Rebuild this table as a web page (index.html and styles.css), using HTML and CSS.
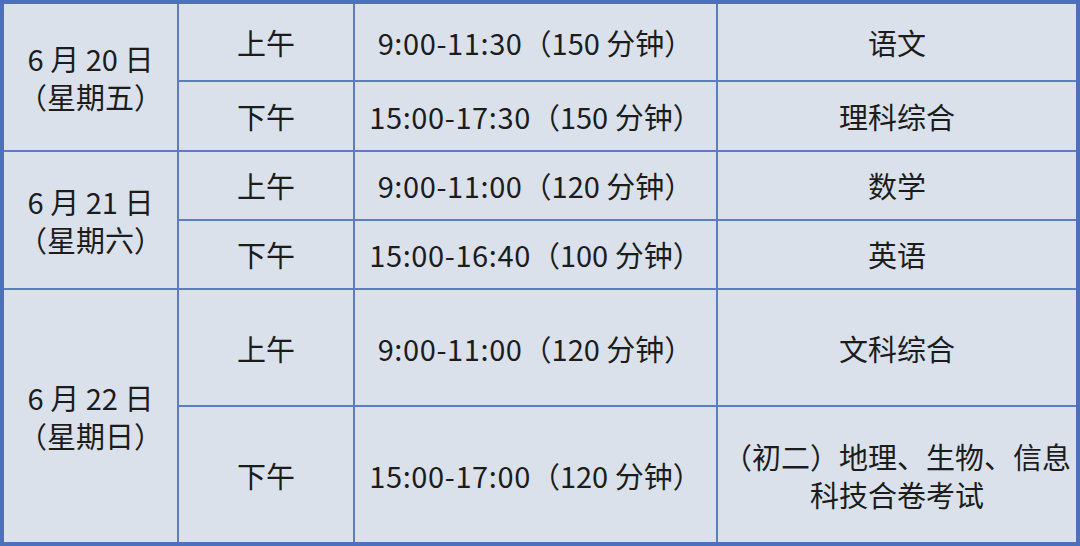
FILE: index.html
```html
<!DOCTYPE html>
<html lang="zh">
<head>
<meta charset="utf-8">
<link rel="stylesheet" href="styles.css">
</head>
<body>
<table class="schedule">
  <colgroup>
    <col class="c-date">
    <col class="c-period">
    <col class="c-time">
    <col class="c-subject">
  </colgroup>
  <tbody>
    <tr class="r1">
      <td rowspan="2" class="date">6 月 20 日<br>（星期五）</td>
      <td>上午</td>
      <td class="time"><span class="num">9:00-11:30</span>（150 分钟）</td>
      <td>语文</td>
    </tr>
    <tr class="r2">
      <td>下午</td>
      <td class="time"><span class="num">15:00-17:30</span>（150 分钟）</td>
      <td>理科综合</td>
    </tr>
    <tr class="r3">
      <td rowspan="2" class="date">6 月 21 日<br>（星期六）</td>
      <td>上午</td>
      <td class="time"><span class="num">9:00-11:00</span>（120 分钟）</td>
      <td>数学</td>
    </tr>
    <tr class="r4">
      <td>下午</td>
      <td class="time"><span class="num">15:00-16:40</span>（100 分钟）</td>
      <td>英语</td>
    </tr>
    <tr class="r5">
      <td rowspan="2" class="date">6 月 22 日<br>（星期日）</td>
      <td>上午</td>
      <td class="time"><span class="num">9:00-11:00</span>（120 分钟）</td>
      <td>文科综合</td>
    </tr>
    <tr class="r6">
      <td>下午</td>
      <td class="time"><span class="num">15:00-17:00</span>（120 分钟）</td>
      <td class="multi">（初二）地理、生物、信息<br>科技合卷考试</td>
    </tr>
  </tbody>
</table>
</body>
</html>
```

FILE: styles.css
```css
html, body {
  margin: 0;
  padding: 0;
  background: #dae1eb;
}

.schedule {
  width: 1080px;
  height: 546px;
  border-collapse: collapse;
  table-layout: fixed;
  background: #dae1eb;
  border: 4px solid #4d70bb;
  font-family: "Noto Sans CJK SC", "Noto Sans", sans-serif;
  font-size: 29px;
  color: #1c1c1c;
}

.c-date { width: 176px; }
.c-period { width: 176px; }
.c-time { width: 363px; }
.c-subject { width: 361px; }

.schedule td {
  border: 2px solid #5c7ec0;
  text-align: center;
  vertical-align: middle;
  padding: 0;
  line-height: 38px;
}

.r1 { height: 79px; }
.r2 { height: 69px; }
.r3 { height: 69px; }
.r4 { height: 69px; }
.r5 { height: 117px; }
.r6 { height: 137px; }

.num {
  letter-spacing: 0.6px;
}

.date {
  line-height: 40px;
}

.multi {
  line-height: 38px;
}
```
